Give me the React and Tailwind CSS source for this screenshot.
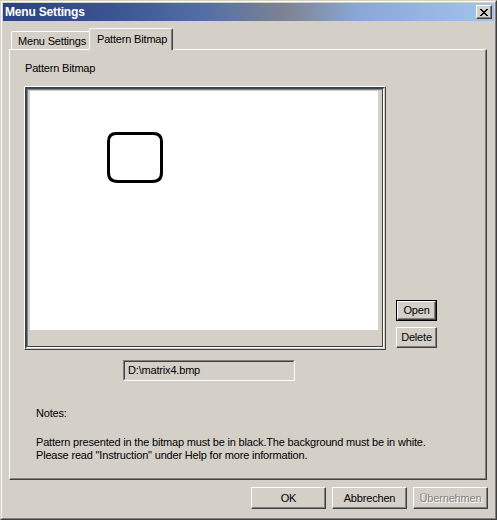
import React from 'react';

const bevel =
  'border border-t-white border-l-white border-r-[#404040] border-b-[#404040] shadow-[inset_-1px_-1px_0_#808080]';

function Btn({ children, className = '', isDefault = false, disabled = false }) {
  const face = (
    <div className={`h-full w-full flex items-center justify-center bg-[#d4d0c8] ${bevel}`}>
      <span
        className={
          disabled
            ? 'text-[#808080] [text-shadow:1px_1px_0_#ffffff]'
            : 'text-black'
        }
      >
        {children}
      </span>
    </div>
  );
  if (isDefault) {
    return <div className={`border border-black ${className}`}>{face}</div>;
  }
  return <div className={className}>{face}</div>;
}

function CloseGlyph() {
  const rows = ['XX....XX', '.XX..XX.', '..XXXX..', '...XX...', '..XXXX..', '.XX..XX.', 'XX....XX'];
  const rects = [];
  rows.forEach((row, y) => {
    row.split('').forEach((c, x) => {
      if (c === 'X') rects.push(<rect key={`${x}-${y}`} x={x} y={y} width="1" height="1" fill="#000" />);
    });
  });
  return (
    <svg width="8" height="7" viewBox="0 0 8 7" shapeRendering="crispEdges">
      {rects}
    </svg>
  );
}

function App() {
  return (
    <div className="w-[497px] h-[520px] bg-[#d4d0c8] font-['Liberation_Sans',Arial,sans-serif] text-[11px] leading-[13px] tracking-[-0.18px] text-black border border-t-[#d4d0c8] border-l-[#d4d0c8] border-r-[#404040] border-b-[#404040]">
      <div className="h-full w-full p-px border border-t-white border-l-white border-r-[#808080] border-b-[#808080]">
        {/* title bar */}
        <div className="h-[18px] flex items-center justify-between pl-[2px] pr-[2px] bg-[linear-gradient(to_right,#2c4381,#3b5391_22%,#5670a6_42%,#7e8494_58%,#8aa6d6_72%,#a2c4ec)]">
          <span className="text-white font-bold text-[12px]">Menu Settings</span>
          <div className={`w-[16px] h-[14px] flex items-center justify-center bg-[#d4d0c8] ${bevel}`}>
            <CloseGlyph />
          </div>
        </div>

        <div className="pl-[6px] pt-[7px]">
          {/* tabs */}
          <div className="flex items-end h-[21px]">
            <div className="ml-[2px] w-[78px] h-[18px] pl-[6px] pt-[3px] rounded-tl-[2px] border-t border-l border-t-white border-l-white">
              Menu Settings
            </div>
            <div className="relative z-10 -mb-px w-[84px] h-[22px] pl-[7px] pt-[4px] bg-[#d4d0c8] rounded-t-[2px] border-t border-l border-r border-t-white border-l-white border-r-[#404040] shadow-[inset_-1px_0_0_#808080]">
              Pattern Bitmap
            </div>
          </div>

          {/* panel */}
          <div className={`w-[478px] h-[431px] ${bevel}`}>
            <div className="ml-[15px] mt-[12px]">Pattern Bitmap</div>

            <div className="flex mt-[11px] ml-[14px]">
              <div className="w-[362px] h-[264px] border border-t-white border-l-white border-r-[#404040] border-b-[#404040]">
                <div className="h-full w-full border border-t-[#404040] border-l-[#404040] border-r-[#d4d0c8] border-b-[#d4d0c8]">
                  <div className="h-full w-full border border-t-[#3c4660] border-l-[#3c4660] border-r-white border-b-white">
                    <div className="h-full w-full pl-[2px] pt-px bg-[#d4d0c8] border border-t-[#808080] border-l-[#808080] border-r-[#404040] border-b-[#404040]">
                      <div className="w-[348px] h-[239px] bg-white pl-[77px] pt-[41px]">
                        <svg width="58" height="52" viewBox="0 0 58 52">
                          <path
                            d="M9 1.5 H46.5 Q54.5 1.5 54.5 9.5 V40.5 Q54.5 49.5 45.5 49.5 H10.5 Q1.5 49.5 1.5 40.5 V9.5 Q1.5 1.5 9 1.5 Z"
                            fill="none"
                            stroke="#000"
                            strokeWidth="3"
                          />
                        </svg>
                      </div>
                    </div>
                  </div>
                </div>
              </div>
              <div className="ml-[10px] flex flex-col justify-end pb-[2px] gap-[6px]">
                <Btn isDefault className="w-[41px] h-[21px]">Open</Btn>
                <Btn className="w-[41px] h-[21px]">Delete</Btn>
              </div>
            </div>

            <div className="mt-[10px] ml-[113px] w-[172px] h-[21px] border border-t-[#808080] border-l-[#808080] border-r-white border-b-white">
              <div className="h-full w-full pl-[3px] flex items-center border border-t-[#404040] border-l-[#404040] border-r-[#d4d0c8] border-b-[#d4d0c8]">
                D:\matrix4.bmp
              </div>
            </div>

            <div className="mt-[26px] ml-[26px]">Notes:</div>
            <div className="mt-[16px] ml-[26px]">
              <div>Pattern presented in the bitmap must be in black.The background must be in white.</div>
              <div>Please read "Instruction" under Help for more information.</div>
            </div>
          </div>

          {/* dialog buttons */}
          <div className="mt-[7px] flex justify-end gap-[6px] pr-[6px] w-[485px]">
            <Btn className="w-[75px] h-[22px]">OK</Btn>
            <Btn className="w-[75px] h-[22px]">Abbrechen</Btn>
            <Btn disabled className="w-[75px] h-[22px]">Übernehmen</Btn>
          </div>
        </div>
      </div>
    </div>
  );
}

export default App;
